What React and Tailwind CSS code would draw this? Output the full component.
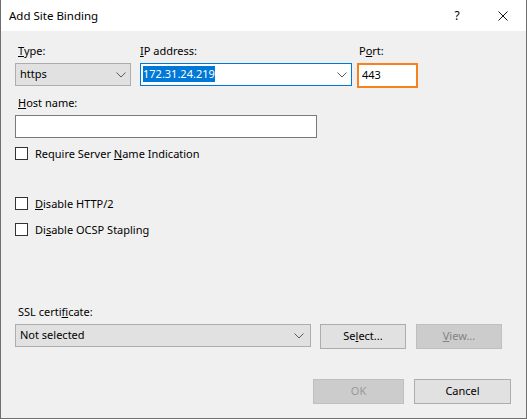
// App.jsx
import React from 'react';

const Chevron = () => (
  <svg width="10" height="6" viewBox="0 0 10 6" className="shrink-0">
    <polyline points="0.5,0.5 5,5 9.5,0.5" fill="none" stroke="#5a5a5a" strokeWidth="1" />
  </svg>
);

const Label = ({ children, className = '' }) => (
  <div className={`h-[16px] leading-[16px] ${className}`}>{children}</div>
);

const Check = ({ children, className = '' }) => (
  <div className={`flex items-center h-[13px] ${className}`}>
    <div className="w-[13px] h-[13px] border border-[#333333] bg-white shrink-0" />
    <span className="ml-[7px] leading-[16px] whitespace-nowrap">{children}</span>
  </div>
);

const App = () => {
  return (
    <div className="w-[527px] h-[419px] bg-[#f0f0f0] border-x border-b border-[#6e6e6e] flex flex-col font-['Segoe_UI','Noto_Sans',sans-serif] text-[11px] text-black overflow-hidden">
      {/* title bar */}
      <div className="h-[31px] bg-white flex items-center shrink-0">
        <span className="pl-[8px] text-[11.5px]">Add Site Binding</span>
        <div className="ml-auto flex h-full">
          <div className="w-[46px] h-full flex items-center justify-center text-[12px]">?</div>
          <div className="w-[46px] h-full flex items-center justify-center">
            <svg width="10" height="10" viewBox="0 0 10 10">
              <path d="M0.5 0.5 L9.5 9.5 M9.5 0.5 L0.5 9.5" stroke="#111" strokeWidth="1" />
            </svg>
          </div>
        </div>
      </div>

      {/* body */}
      <div className="flex-1 flex flex-col pl-[14px] pt-[12px]">
        <div className="flex items-start h-[43px]">
          <div className="w-[116px]">
            <Label className="pl-[3px]"><u>T</u>ype:</Label>
            <div className="mt-[4px] h-[23px] bg-[#e1e1e1] border border-[#adadad] flex items-center pl-[4px] pr-[4px]">
              <span className="flex-1">https</span>
              <Chevron />
            </div>
          </div>
          <div className="w-[212px] ml-[9px]">
            <Label><u>I</u>P address:</Label>
            <div className="mt-[4px] h-[23px] bg-white border border-[#0078d7] flex items-center pl-[2px] pr-[4px]">
              <span className="flex-1">
                <span className="bg-[#0078d7] text-white leading-[16px] inline-block">172.31.24.219</span>
              </span>
              <Chevron />
            </div>
          </div>
          <div className="w-[61px] ml-[5px]">
            <Label className="pl-[2px]">P<u>o</u>rt:</Label>
            <div className="mt-[4px] h-[25px] bg-white border-2 border-[#f7801f] flex items-center pl-[3px]">443</div>
          </div>
        </div>

        <Label className="mt-[9px] pl-[3px]"><u>H</u>ost name:</Label>
        <div className="mt-[4px] w-[302px] h-[23px] bg-white border border-[#7a7a7a]" />

        <Check className="mt-[9px]">Require Server <u>N</u>ame Indication</Check>
        <Check className="mt-[37px]"><u>D</u>isable HTTP/2</Check>
        <Check className="mt-[13px]">Di<u>s</u>able OCSP Stapling</Check>

        <Label className="mt-[68px] pl-[3px]">SSL certi<u>f</u>icate:</Label>
        <div className="mt-[4px] flex items-start">
          <div className="w-[296px] h-[23px] bg-[#e1e1e1] border border-[#adadad] flex items-center pl-[4px] pr-[6px]">
            <span className="flex-1">Not selected</span>
            <Chevron />
          </div>
          <button className="ml-[9px] w-[86px] h-[25px] bg-[#e1e1e1] border border-[#adadad] flex items-center justify-center">
            Se<u>l</u>ect...
          </button>
          <button className="ml-[10px] w-[86px] h-[25px] bg-[#cccccc] border border-[#bfbfbf] text-[#838383] flex items-center justify-center">
            <u>V</u>iew...
          </button>
        </div>

        <div className="mt-[30px] flex justify-end pr-[15px]">
          <button className="w-[91px] h-[25px] bg-[#cccccc] border border-[#bfbfbf] text-[#9a9a9a] flex items-center justify-center">
            OK
          </button>
          <button className="ml-[10px] w-[97px] h-[25px] bg-[#e1e1e1] border border-[#adadad] flex items-center justify-center">
            Cancel
          </button>
        </div>
      </div>
    </div>
  );
};

export default App;
